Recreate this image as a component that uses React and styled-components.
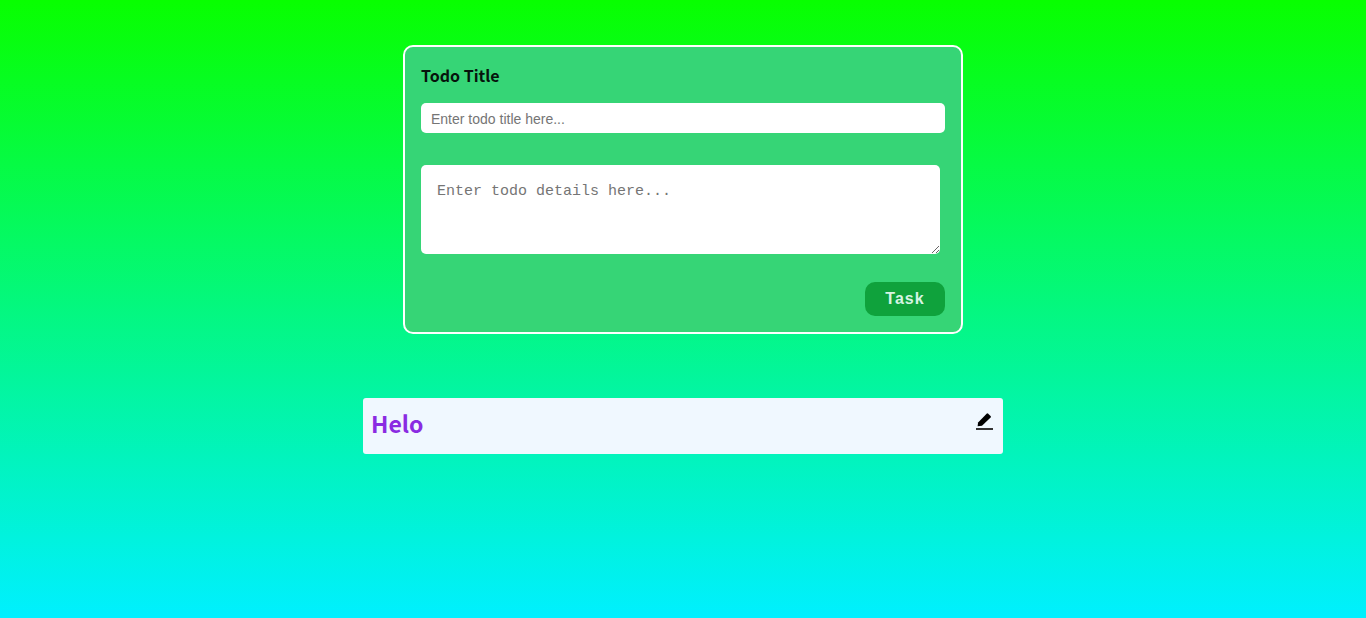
import React from "react";
import styled, { createGlobalStyle } from "styled-components";

const GlobalStyle = createGlobalStyle`
  *, *::before, *::after {
    box-sizing: border-box;
  }
  body {
    margin: 0;
    font-family: "Noto Sans CJK SC", "Open Sans", sans-serif;
  }
`;

const Page = styled.main`
  display: flex;
  flex-direction: column;
  align-items: center;
  gap: 64px;
  min-height: 100vh;
  padding: 45px 16px;
  background: linear-gradient(#08ff00, #00f0ff);
`;

const TodoForm = styled.form`
  display: flex;
  flex-direction: column;
  width: 100%;
  max-width: 560px;
  padding: 16px;
  border: 2px solid #fff;
  border-radius: 10px;
  background: #36d576;
`;

const Label = styled.label`
  margin-bottom: 16px;
  font-size: 16px;
  font-weight: 700;
  line-height: 24px;
  color: #06140c;
`;

const TitleInput = styled.input`
  width: 100%;
  height: 30px;
  margin-bottom: 32px;
  padding: 2px 10px 0;
  border: 0;
  border-radius: 5px;
  outline: 0;
  font: 14px "Liberation Sans", Arial, sans-serif;

  &::placeholder {
    color: #757575;
  }
`;

const DetailsInput = styled.textarea`
  height: 89px;
  margin: 0 5px 28px 0;
  padding: 16px;
  border: 0;
  border-radius: 5px;
  outline: 0;
  resize: both;
  font: 15px/22px Consolas, "Liberation Mono", monospace;

  &::placeholder {
    color: #757575;
  }
`;

const SubmitButton = styled.button`
  align-self: flex-end;
  width: 80px;
  height: 34px;
  padding: 0;
  border: 0;
  border-radius: 10px;
  background: #0fa23c;
  color: #d6f5e3;
  font: 700 16px "Liberation Sans", Arial, sans-serif;
  letter-spacing: 1px;
  cursor: pointer;
`;

const TodoItem = styled.article`
  display: flex;
  align-items: flex-start;
  justify-content: space-between;
  width: 100%;
  max-width: 640px;
  min-height: 56px;
  padding: 8px;
  border-radius: 3px;
  background: aliceblue;
`;

const TodoHeading = styled.h2`
  margin: 0;
  font-size: 23px;
  font-weight: 700;
  line-height: 34px;
  color: blueviolet;
`;

const EditButton = styled.button`
  display: flex;
  margin-top: 6px;
  padding: 0;
  border: 0;
  background: none;
  color: #000;
  cursor: pointer;
`;

const EditIcon = () => (
  <svg width="20" height="20" viewBox="0 0 20 20" fill="currentColor" aria-hidden="true">
    <path d="M2.6 14.2 3.1 10.4 11.6 1.7Q12.4 1 13.2 1.7L15.6 3.9Q16.3 4.6 15.6 5.4L7 13.8Z" />
    <path d="M1 16h17v2H1z" fill="#333" />
  </svg>
);

export default function App() {
  return (
    <>
      <GlobalStyle />
      <Page>
        <TodoForm onSubmit={(event) => event.preventDefault()}>
          <Label htmlFor="todo-title">Todo Title</Label>
          <TitleInput id="todo-title" type="text" placeholder="Enter todo title here..." />
          <DetailsInput aria-label="Todo details" placeholder="Enter todo details here..." />
          <SubmitButton type="submit">Task</SubmitButton>
        </TodoForm>
        <TodoItem>
          <TodoHeading>Helo</TodoHeading>
          <EditButton type="button" aria-label="Edit todo">
            <EditIcon />
          </EditButton>
        </TodoItem>
      </Page>
    </>
  );
}
